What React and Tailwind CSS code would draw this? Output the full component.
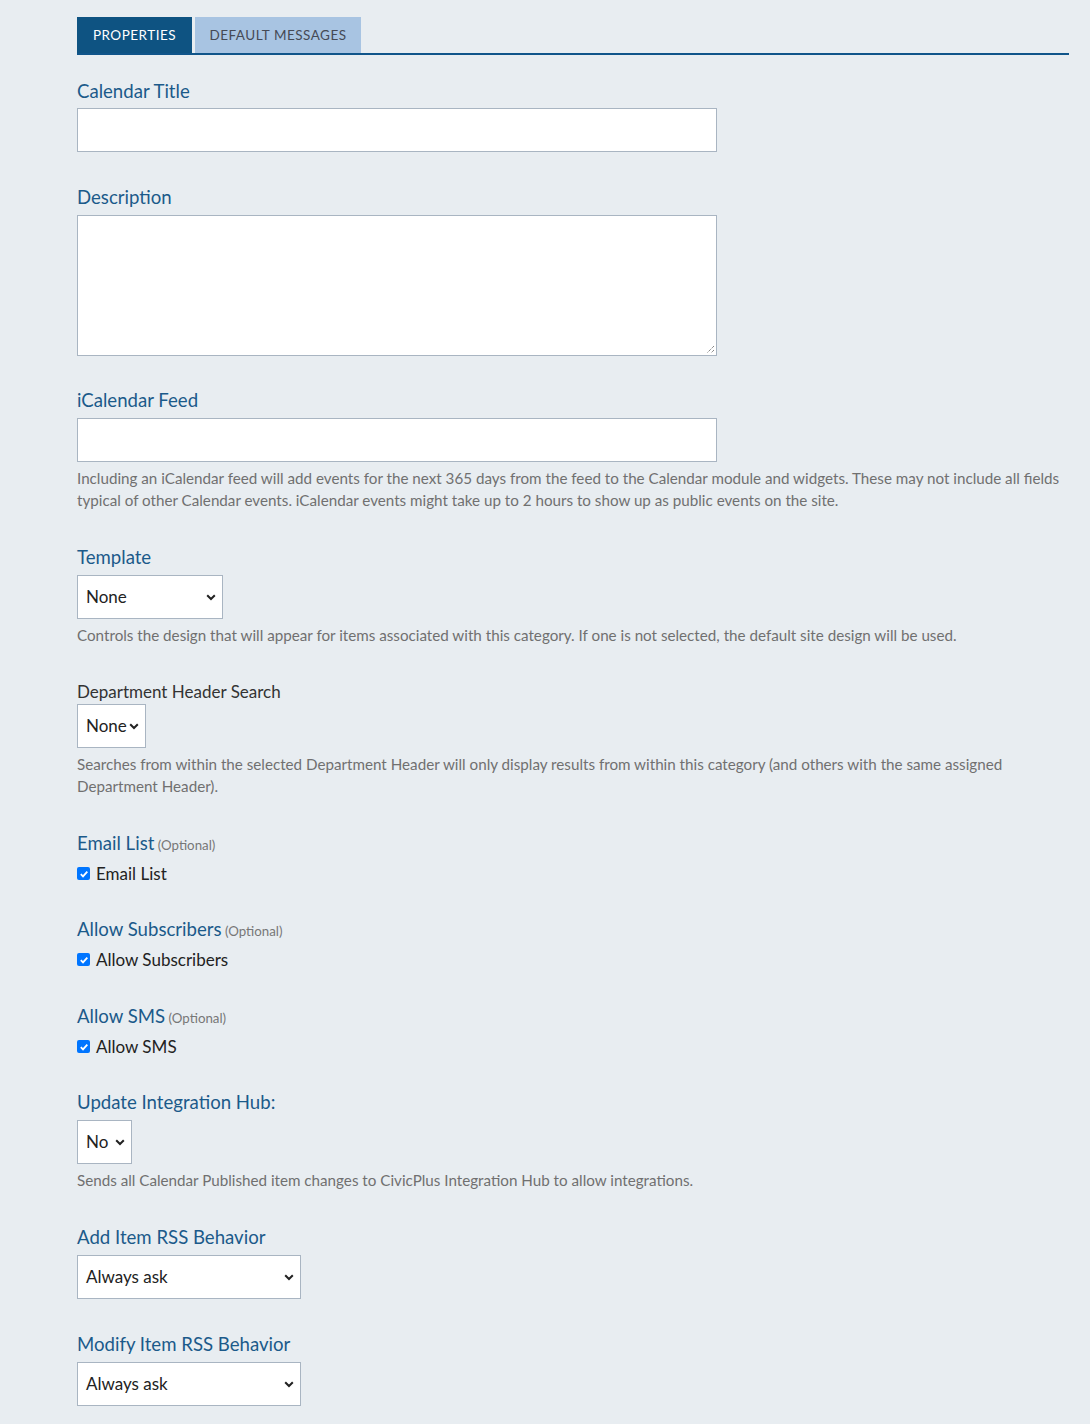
import React from "react";

const font = { fontFamily: "Lato, 'Noto Sans', sans-serif" };

function Label({ children, optional }) {
  return (
    <div className="text-[18.6px] leading-[23px] text-[#1b5a8a] mb-[6px]">
      {children}
      {optional && <span className="text-[13.3px] text-[#777]"> (Optional)</span>}
    </div>
  );
}

function Help({ children }) {
  return <p className="mt-[5px] text-[15.2px] leading-[22px] text-[#707070]">{children}</p>;
}

function Select({ value, w }) {
  return (
    <div className={`${w} h-[44px] bg-white border border-[#a9b5c2] flex items-center justify-between pl-[8px] pr-[6px] text-[17px] text-[#222]`}>
      <span>{value}</span>
      <svg width="10" height="7" viewBox="0 0 10 7" className="shrink-0">
        <path d="M1.2 1.2 L5 5 L8.8 1.2" fill="none" stroke="#222" strokeWidth="2" />
      </svg>
    </div>
  );
}

function Check({ label }) {
  return (
    <label className="flex items-center gap-[6px] h-[21px] text-[17px] text-[#222]">
      <span className="w-[13px] h-[13px] rounded-[2px] bg-[#0075ff] flex items-center justify-center">
        <svg width="10" height="10" viewBox="0 0 10 10">
          <path d="M1.8 5.2 L4 7.4 L8.3 2.6" fill="none" stroke="white" strokeWidth="1.8" />
        </svg>
      </span>
      {label}
    </label>
  );
}

export default function App() {
  return (
    <div className="min-h-[1424px] bg-[#e8edf1] pl-[77px] pr-[21px] pt-[17px]" style={font}>
      <div className="flex gap-[3px] border-b-2 border-[#10558a]">
        <div className="h-[36px] w-[115px] bg-[#0e5382] text-white text-[13.5px] tracking-[0.5px] flex items-center justify-center">PROPERTIES</div>
        <div className="h-[36px] w-[166px] bg-[#a8c4e2] text-[#454a55] text-[13.5px] tracking-[0.5px] flex items-center justify-center">DEFAULT MESSAGES</div>
      </div>

      <div className="mt-[25px]">
        <div className="text-[18.6px] leading-[23px] text-[#1b5a8a] mb-[5px]">Calendar Title</div>
        <div className="w-[640px] h-[44px] bg-white border border-[#a9b5c2]" />
      </div>

      <div className="mt-[34px]">
        <Label>Description</Label>
        <div className="relative w-[640px] h-[141px] bg-white border border-[#a9b5c2]">
          <svg className="absolute right-[1px] bottom-[1px]" width="10" height="10" viewBox="0 0 10 10">
            <path d="M9 2 L2 9 M9 6 L6 9" stroke="#555" strokeWidth="1" strokeDasharray="1 1" />
          </svg>
        </div>
      </div>

      <div className="mt-[33px]">
        <Label>iCalendar Feed</Label>
        <div className="w-[640px] h-[44px] bg-white border border-[#a9b5c2]" />
        <Help>
          Including an iCalendar feed will add events for the next 365 days from the feed to the Calendar module and widgets. These may not include all fields typical of other Calendar events. iCalendar events might take up to 2 hours to show up as public events on the site.
        </Help>
      </div>

      <div className="mt-[35px]">
        <Label>Template</Label>
        <Select value="None" w="w-[146px]" />
        <Help>Controls the design that will appear for items associated with this category. If one is not selected, the default site design will be used.</Help>
      </div>

      <div className="mt-[35px]">
        <div className="text-[17px] leading-[22px] text-[#333] mb-[1px]">Department Header Search</div>
        <Select value="None" w="w-[69px]" />
        <Help>Searches from within the selected Department Header will only display results from within this category (and others with the same assigned Department Header).</Help>
      </div>

      <div className="mt-[35px]">
        <Label optional>Email List</Label>
        <Check label="Email List" />
      </div>

      <div className="mt-[34px]">
        <Label optional>Allow Subscribers</Label>
        <Check label="Allow Subscribers" />
      </div>

      <div className="mt-[35px]">
        <Label optional>Allow SMS</Label>
        <Check label="Allow SMS" />
      </div>

      <div className="mt-[34px]">
        <Label>Update Integration Hub:</Label>
        <Select value="No" w="w-[55px]" />
        <Help>Sends all Calendar Published item changes to CivicPlus Integration Hub to allow integrations.</Help>
      </div>

      <div className="mt-[35px]">
        <Label>Add Item RSS Behavior</Label>
        <Select value="Always ask" w="w-[224px]" />
      </div>

      <div className="mt-[34px]">
        <Label>Modify Item RSS Behavior</Label>
        <Select value="Always ask" w="w-[224px]" />
      </div>
    </div>
  );
}
